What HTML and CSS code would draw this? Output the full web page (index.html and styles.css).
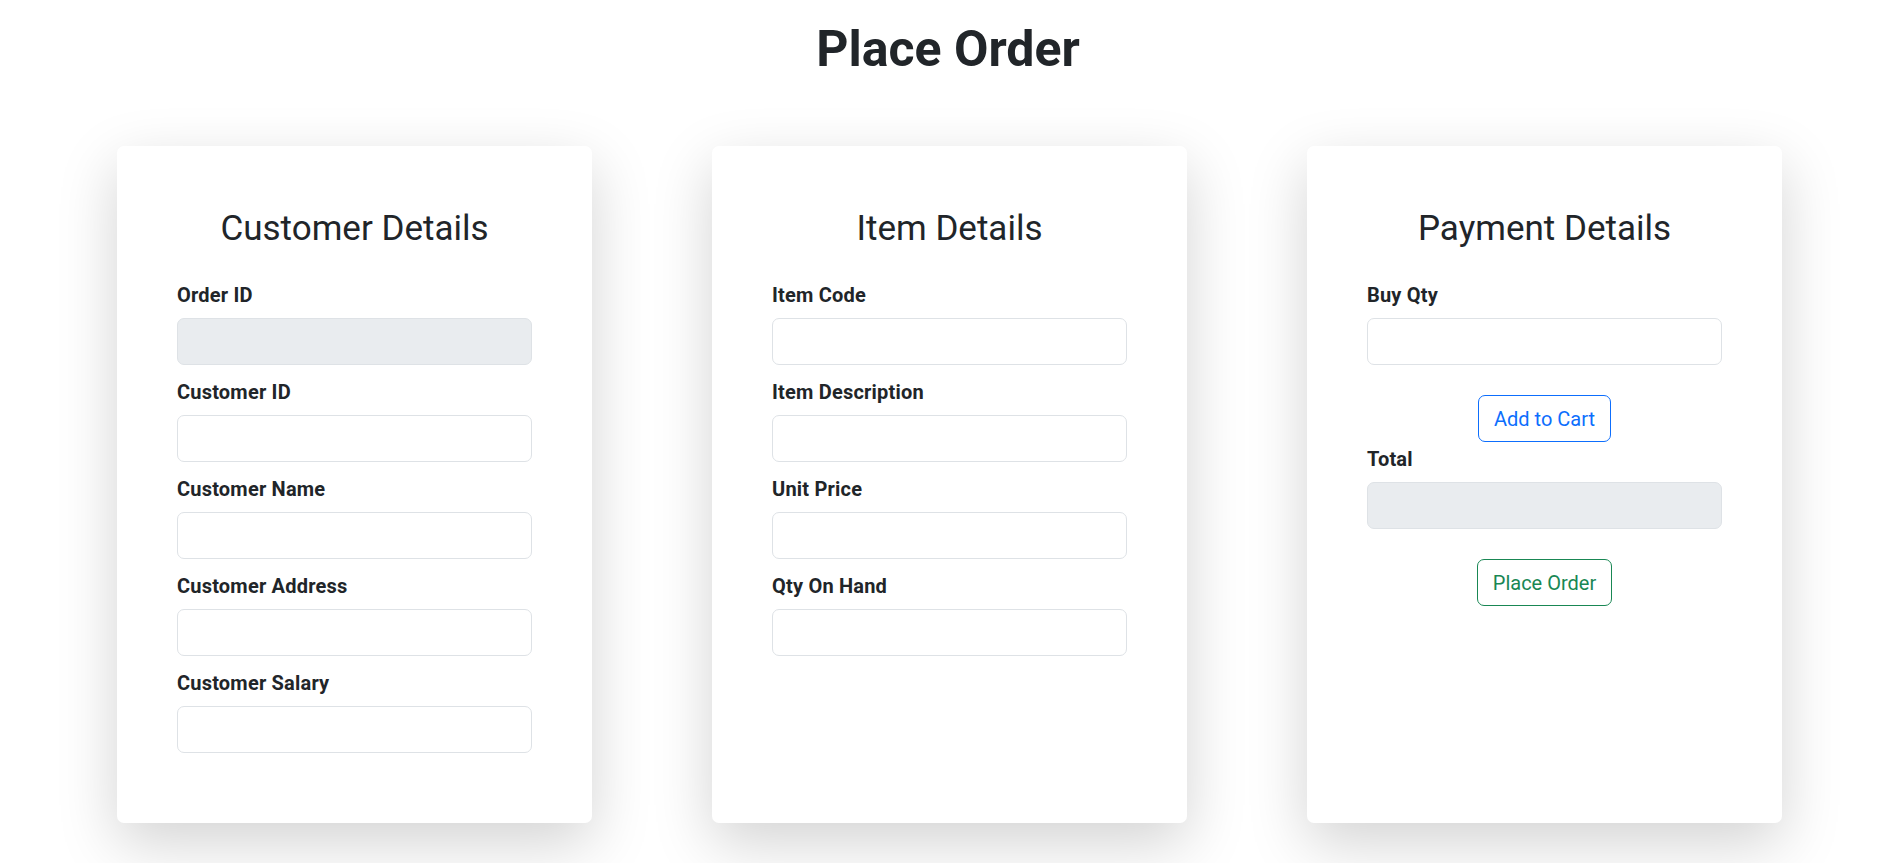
FILE: index.html
```html
<!DOCTYPE html>
<html lang="en">
<head>
<meta charset="utf-8">
<title>Place Order</title>
<link rel="stylesheet" href="styles.css">
</head>
<body>
<h1 class="page-title">Place Order</h1>
<main class="cards">
  <section class="card">
    <h3 class="card-title">Customer Details</h3>
    <div class="field"><label class="field-label">Order ID</label><input class="field-input is-readonly" type="text" readonly></div>
    <div class="field"><label class="field-label">Customer ID</label><input class="field-input" type="text"></div>
    <div class="field"><label class="field-label">Customer Name</label><input class="field-input" type="text"></div>
    <div class="field"><label class="field-label">Customer Address</label><input class="field-input" type="text"></div>
    <div class="field"><label class="field-label">Customer Salary</label><input class="field-input" type="text"></div>
  </section>
  <section class="card">
    <h3 class="card-title">Item Details</h3>
    <div class="field"><label class="field-label">Item Code</label><input class="field-input" type="text"></div>
    <div class="field"><label class="field-label">Item Description</label><input class="field-input" type="text"></div>
    <div class="field"><label class="field-label">Unit Price</label><input class="field-input" type="text"></div>
    <div class="field"><label class="field-label">Qty On Hand</label><input class="field-input" type="text"></div>
  </section>
  <section class="card">
    <h3 class="card-title">Payment Details</h3>
    <div class="field"><label class="field-label">Buy Qty</label><input class="field-input" type="text"></div>
    <div class="action"><button class="btn btn-blue" type="button">Add to Cart</button></div>
    <div class="field"><label class="field-label">Total</label><input class="field-input is-readonly" type="text" readonly></div>
    <div class="action"><button class="btn btn-green" type="button">Place Order</button></div>
  </section>
</main>
</body>
</html>
```

FILE: styles.css
```css
* { box-sizing: border-box; }
body {
  margin: 0;
  background: #fff;
  color: #212529;
  font-family: Roboto, "Liberation Sans", sans-serif;
  font-size: 20px;
  line-height: 1.5;
}
.page-title {
  margin: 19px 0 0;
  text-align: center;
  font-size: 50px;
  font-weight: 700;
  line-height: 60px;
}
.cards {
  display: flex;
  justify-content: center;
  gap: 120px;
  margin-top: 67px;
  padding: 0 0 40px 3px;
}
.card {
  flex: 0 0 475px;
  background: #fff;
  border-radius: 7px;
  padding: 60px;
  box-shadow: 0 20px 60px rgba(0,0,0,.175);
}
.card-title {
  margin: 2px 0 28px;
  text-align: center;
  font-size: 35px;
  font-weight: 400;
  line-height: 42px;
}
.field { margin-bottom: 10px; }
.field-label {
  display: block;
  padding-top: 1.5px;
  margin-bottom: 8.5px;
  font-weight: 700;
  line-height: 30px;
  letter-spacing: 0.2px;
}
.field-input {
  display: block;
  width: 100%;
  height: 47px;
  padding: 7px 15px;
  border: 1px solid #dee2e6;
  border-radius: 7px;
  background: #fff;
  font: inherit;
  color: #212529;
}
.field-input.is-readonly { background: #e9ecef; }
.action {
  display: flex;
  justify-content: center;
  margin-top: 30px;
}
.btn {
  height: 47px;
  padding: 7px 15px;
  border-radius: 7px;
  background: transparent;
  font: inherit;
  line-height: 30px;
  cursor: pointer;
}
.btn-blue { border: 1px solid #0d6efd; color: #0d6efd; }
.btn-green { border: 1px solid #198754; color: #198754; }
```
